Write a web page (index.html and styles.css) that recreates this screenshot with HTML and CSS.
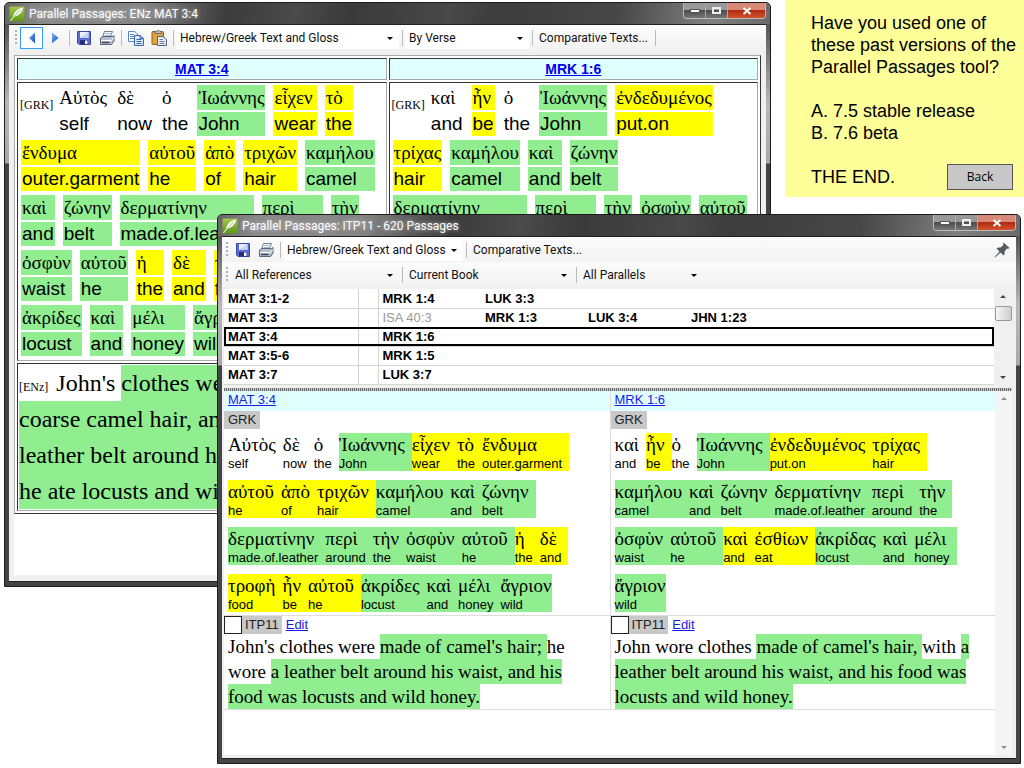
FILE: index.html
```html
<!DOCTYPE html>
<html lang="en">
<head>
<meta charset="utf-8">
<title>Parallel Passages</title>
<link rel="stylesheet" href="styles.css">
</head>
<body>
<svg class="defs" aria-hidden="true">
  <defs>
    <linearGradient id="gLeaf" x1="0" y1="0" x2="0" y2="1"><stop offset="0" stop-color="#a3c84c"/><stop offset="1" stop-color="#5f961a"/></linearGradient>
    <linearGradient id="gBlue" x1="0" y1="0" x2="1" y2="1"><stop offset="0" stop-color="#7fb2f2"/><stop offset="1" stop-color="#0b4fc4"/></linearGradient>
    <symbol id="logo" viewBox="0 0 16 16"><rect x=".5" y=".5" width="15" height="15" rx="1" fill="url(#gLeaf)"/><path d="M4 10.500C5 6 8.500 2.500 14 1.500C13.500 5 11.500 9 6 10.500Z" fill="#fff"/><path d="M1.500 15L6 9" stroke="#fff" stroke-width="1" fill="none"/><path d="M5 10.500L11.500 4" stroke="#86a84a" stroke-width=".8"/></symbol>
    <symbol id="prev" viewBox="0 0 16 16"><path d="M11 2.500V13.500L5 8Z" fill="url(#gBlue)"/></symbol>
    <symbol id="next" viewBox="0 0 16 16"><path d="M5 2.500V13.500L11.500 8Z" fill="url(#gBlue)"/></symbol>
    <symbol id="save" viewBox="0 0 16 16"><path d="M1.500 1.500H14.500V14.500H3L1.500 13Z" fill="#5a6cd4" stroke="#3a4aa4"/><rect x="4" y="2" width="8.500" height="6" fill="#e9effc"/><path d="M4 8L12.500 2V8Z" fill="#c4d2f2"/><rect x="4" y="10" width="8" height="4.500" fill="#25307c"/><rect x="9" y="10.500" width="2.500" height="3.500" fill="#fff"/></symbol>
    <symbol id="print" viewBox="0 0 16 16"><path d="M5.500 1.500H13.500L11 7.500H3.500Z" fill="#fbfcff" stroke="#6f7f98"/><path d="M6 3.500H11.500M5.500 5.500H11" stroke="#a9b8cf"/><path d="M1.500 8L4 6.500H13.500L15 5.500V11L12.500 14.500H1.500Z" fill="#b5bfcf" stroke="#58657a"/><path d="M2 10.500H12.500L15 7.500" stroke="#fff" fill="none"/><path d="M3 12.500H10.500" stroke="#3f4b5e" stroke-width="1.500"/></symbol>
    <symbol id="copy" viewBox="0 0 16 16"><path d="M.5 1.500H6.500L9.500 4V11.500H.5Z" fill="#f5f9ff" stroke="#5b86c4"/><path d="M2 4.500H6M2 6.500H6M2 8.500H6" stroke="#5b86c4"/><path d="M6.500 5.500H12L15.500 8.500V15.500H6.500Z" fill="#dfeafb" stroke="#3866ac"/><path d="M8.500 9.500H13.500M8.500 11.500H13.500M8.500 13.500H13.500M12 5.500V8.500H15.500" stroke="#3866ac" fill="none"/></symbol>
    <symbol id="paste" viewBox="0 0 16 16"><rect x="1" y="1.500" width="11.500" height="13" rx="1" fill="#e0a63c" stroke="#8d5f14"/><path d="M4 3.500V1.500H5.500L6.500.5H8L9 1.500H10.500V3.500Z" fill="#b9bdc6" stroke="#5b5f68" stroke-width=".8"/><path d="M6.500 6.500H12L15.500 9.500V15.500H6.500Z" fill="#e6ecf6" stroke="#55627c"/><path d="M8.500 9.500H12M8.500 11.500H13.500M8.500 13.500H13.500" stroke="#6d7f9f"/></symbol>
    <symbol id="pin" viewBox="0 0 16 16"><path d="M9.500.5L15.500 6L14 7L13 6.500L10.500 9.500C11 11 10.500 12.500 9.500 13.500L6.500 10.500L1 15.500L.5 15L5.500 9.500L2.500 6.500C3.500 5.500 5 5.200 6.500 5.500L9.500 3L9 2Z" fill="#55585e"/></symbol>
  </defs>
</svg>

<main class="desktop">
  <section class="window window-verse" aria-label="Parallel Passages: ENz MAT 3:4">
    <header class="titlebar">
      <svg class="app-icon"><use href="#logo"/></svg>
      <h1 class="title">Parallel Passages: ENz MAT 3:4</h1>
      <div class="controls">
        <button class="ctl" aria-label="Minimize"><span class="glyph-min"></span></button>
        <button class="ctl" aria-label="Maximize"><span class="glyph-max"></span></button>
        <button class="ctl ctl-close" aria-label="Close"><svg viewBox="0 0 10 8"><path d="M1.500 1L8.500 7M8.500 1L1.500 7"/></svg></button>
      </div>
    </header>
    <div class="client">
      <div class="toolbar">
        <span class="grip"></span>
        <button class="tool tool-active" aria-label="Previous"><svg><use href="#prev"/></svg></button>
        <button class="tool" aria-label="Next"><svg><use href="#next"/></svg></button>
        <span class="sep"></span>
        <button class="tool" aria-label="Save"><svg><use href="#save"/></svg></button>
        <button class="tool" aria-label="Print"><svg><use href="#print"/></svg></button>
        <span class="sep"></span>
        <button class="tool" aria-label="Copy"><svg><use href="#copy"/></svg></button>
        <button class="tool" aria-label="Paste"><svg><use href="#paste"/></svg></button>
        <span class="sep"></span>
        <span class="combo combo-white combo-xl"><select aria-label="Text view"><option>Hebrew/Greek Text and Gloss</option></select></span>
        <span class="sep"></span>
        <span class="combo combo-white combo-sm"><select aria-label="Grouping"><option>By Verse</option></select></span>
        <span class="sep"></span>
        <button class="text-tool">Comparative Texts...</button>
        <span class="sep"></span>
      </div>
      <div class="document">
        <table class="verse-table">
          <thead>
            <tr><th><a href="#">MAT 3:4</a></th><th><a href="#">MRK 1:6</a></th></tr>
          </thead>
          <tbody>
            <tr>
              <td>
                <div class="line"><span class="source">[GRK]</span><span class="w"><span>Αὐτὸς</span><span>self</span></span><span class="w"><span>δὲ</span><span>now</span></span><span class="w"><span>ὁ</span><span>the</span></span><span class="w g"><span>Ἰωάννης</span><span>John</span></span><span class="w y"><span>εἶχεν</span><span>wear</span></span><span class="w y"><span>τὸ</span><span>the</span></span></div>
                <div class="line"><span class="w y"><span>ἔνδυμα</span><span>outer.garment</span></span><span class="w y"><span>αὐτοῦ</span><span>he</span></span><span class="w y"><span>ἀπὸ</span><span>of</span></span><span class="w y"><span>τριχῶν</span><span>hair</span></span><span class="w g"><span>καμήλου</span><span>camel</span></span></div>
                <div class="line"><span class="w g"><span>καὶ</span><span>and</span></span><span class="w g"><span>ζώνην</span><span>belt</span></span><span class="w g"><span>δερματίνην</span><span>made.of.leather</span></span><span class="w g"><span>περὶ</span><span>around</span></span><span class="w g"><span>τὴν</span><span>the</span></span></div>
                <div class="line"><span class="w g"><span>ὀσφὺν</span><span>waist</span></span><span class="w g"><span>αὐτοῦ</span><span>he</span></span><span class="w y"><span>ἡ</span><span>the</span></span><span class="w y"><span>δὲ</span><span>and</span></span><span class="w y"><span>τροφὴ</span><span>food</span></span></div>
                <div class="line"><span class="w g"><span>ἀκρίδες</span><span>locust</span></span><span class="w g"><span>καὶ</span><span>and</span></span><span class="w g"><span>μέλι</span><span>honey</span></span><span class="w g"><span>ἄγριον</span><span>wild</span></span></div>
              </td>
              <td>
                <div class="line"><span class="source">[GRK]</span><span class="w"><span>καὶ</span><span>and</span></span><span class="w y"><span>ἦν</span><span>be</span></span><span class="w"><span>ὁ</span><span>the</span></span><span class="w g"><span>Ἰωάννης</span><span>John</span></span><span class="w y"><span>ἐνδεδυμένος</span><span>put.on</span></span></div>
                <div class="line"><span class="w y"><span>τρίχας</span><span>hair</span></span><span class="w g"><span>καμήλου</span><span>camel</span></span><span class="w g"><span>καὶ</span><span>and</span></span><span class="w g"><span>ζώνην</span><span>belt</span></span></div>
                <div class="line"><span class="w g"><span>δερματίνην</span><span>made.of.leather</span></span><span class="w g"><span>περὶ</span><span>around</span></span><span class="w g"><span>τὴν</span><span>the</span></span><span class="w g"><span>ὀσφὺν</span><span>waist</span></span><span class="w g"><span>αὐτοῦ</span><span>he</span></span></div>
              </td>
            </tr>
            <tr>
              <td><p class="prose"><span class="source-sm">[ENz]</span> John's <mark>clothes were made of<br>coarse camel hair, and he had a<br>leather belt around his waist;<br>he ate locusts and wild honey.</mark></p></td>
              <td></td>
            </tr>
          </tbody>
        </table>
      </div>
    </div>
  </section>

  <aside class="note">
    <p>Have you used one of<br>these past versions of the<br>Parallel Passages tool?</p>
    <p>A. 7.5 stable release<br>B. 7.6 beta</p>
    <div class="note-end"><p>THE END.</p><button class="back">Back</button></div>
  </aside>

  <section class="window window-list" aria-label="Parallel Passages: ITP11 - 620 Passages">
    <header class="titlebar">
      <svg class="app-icon"><use href="#logo"/></svg>
      <h1 class="title">Parallel Passages: ITP11 - 620 Passages</h1>
      <div class="controls">
        <button class="ctl" aria-label="Minimize"><span class="glyph-min"></span></button>
        <button class="ctl" aria-label="Maximize"><span class="glyph-max"></span></button>
        <button class="ctl ctl-close" aria-label="Close"><svg viewBox="0 0 10 8"><path d="M1.500 1L8.500 7M8.500 1L1.500 7"/></svg></button>
      </div>
    </header>
    <div class="client">
      <div class="toolbar">
        <span class="grip"></span>
        <button class="tool" aria-label="Save"><svg><use href="#save"/></svg></button>
        <button class="tool" aria-label="Print"><svg><use href="#print"/></svg></button>
        <span class="sep"></span>
        <span class="combo combo-white combo-lg"><select aria-label="Text view"><option>Hebrew/Greek Text and Gloss</option></select></span>
        <span class="sep"></span>
        <button class="text-tool">Comparative Texts...</button>
        <button class="tool tool-end" aria-label="Pin"><svg><use href="#pin"/></svg></button>
      </div>
      <div class="toolbar">
        <span class="grip"></span>
        <span class="combo combo-md"><select aria-label="References"><option>All References</option></select></span>
        <span class="sep"></span>
        <span class="combo combo-md"><select aria-label="Book"><option>Current Book</option></select></span>
        <span class="sep"></span>
        <span class="combo combo-sm"><select aria-label="Parallels"><option>All Parallels</option></select></span>
      </div>
      <div class="list">
        <table class="refs">
          <colgroup><col class="c-ref"><col class="c-mark"><col class="c-par"><col class="c-par"><col class="c-par"><col></colgroup>
          <tr><th scope="row">MAT 3:1-2</th><td></td><td>MRK 1:4</td><td>LUK 3:3</td><td></td><td></td></tr>
          <tr><th scope="row">MAT 3:3</th><td></td><td class="dim">ISA 40:3</td><td>MRK 1:3</td><td>LUK 3:4</td><td>JHN 1:23</td></tr>
          <tr class="current"><th scope="row">MAT 3:4</th><td></td><td>MRK 1:6</td><td></td><td></td><td></td></tr>
          <tr><th scope="row">MAT 3:5-6</th><td></td><td>MRK 1:5</td><td></td><td></td><td></td></tr>
          <tr><th scope="row">MAT 3:7</th><td></td><td>LUK 3:7</td><td></td><td></td><td></td></tr>
        </table>
        <div class="scroll"><span class="up"></span><span class="thumb"></span><span class="down"></span></div>
      </div>
      <div class="splitter"></div>
      <div class="detail">
        <div class="passages">
          <div class="passage">
            <div class="ref"><a href="#">MAT 3:4</a></div>
            <div class="greek">
              <span class="tag">GRK</span>
              <div class="line"><span class="w"><span>Αὐτὸς</span><span>self</span></span><span class="w"><span>δὲ</span><span>now</span></span><span class="w"><span>ὁ</span><span>the</span></span><span class="w g"><span>Ἰωάννης</span><span>John</span></span><span class="w y"><span>εἶχεν</span><span>wear</span></span><span class="w y"><span>τὸ</span><span>the</span></span><span class="w y"><span>ἔνδυμα</span><span>outer.garment</span></span></div>
              <div class="line"><span class="w y"><span>αὐτοῦ</span><span>he</span></span><span class="w y"><span>ἀπὸ</span><span>of</span></span><span class="w y"><span>τριχῶν</span><span>hair</span></span><span class="w g"><span>καμήλου</span><span>camel</span></span><span class="w g"><span>καὶ</span><span>and</span></span><span class="w g"><span>ζώνην</span><span>belt</span></span></div>
              <div class="line"><span class="w g"><span>δερματίνην</span><span>made.of.leather</span></span><span class="w g"><span>περὶ</span><span>around</span></span><span class="w g"><span>τὴν</span><span>the</span></span><span class="w g"><span>ὀσφὺν</span><span>waist</span></span><span class="w g"><span>αὐτοῦ</span><span>he</span></span><span class="w y"><span>ἡ</span><span>the</span></span><span class="w y"><span>δὲ</span><span>and</span></span></div>
              <div class="line"><span class="w y"><span>τροφὴ</span><span>food</span></span><span class="w y"><span>ἦν</span><span>be</span></span><span class="w y"><span>αὐτοῦ</span><span>he</span></span><span class="w g"><span>ἀκρίδες</span><span>locust</span></span><span class="w g"><span>καὶ</span><span>and</span></span><span class="w g"><span>μέλι</span><span>honey</span></span><span class="w g end"><span>ἄγριον</span><span>wild</span></span></div>
            </div>
            <div class="version">
              <div class="version-head"><input type="checkbox" id="pick-mat"><label class="tag" for="pick-mat">ITP11</label><a href="#">Edit</a></div>
              <p class="prose">John's clothes were <mark>made of camel's hair; </mark>he<br>wore <mark>a leather belt around his waist, and his<br>food was locusts and wild honey.</mark></p>
            </div>
          </div>
          <div class="passage">
            <div class="ref"><a href="#">MRK 1:6</a></div>
            <div class="greek">
              <span class="tag">GRK</span>
              <div class="line"><span class="w"><span>καὶ</span><span>and</span></span><span class="w y"><span>ἦν</span><span>be</span></span><span class="w"><span>ὁ</span><span>the</span></span><span class="w g"><span>Ἰωάννης</span><span>John</span></span><span class="w y"><span>ἐνδεδυμένος</span><span>put.on</span></span><span class="w y"><span>τρίχας</span><span>hair</span></span></div>
              <div class="line"><span class="w g"><span>καμήλου</span><span>camel</span></span><span class="w g"><span>καὶ</span><span>and</span></span><span class="w g"><span>ζώνην</span><span>belt</span></span><span class="w g"><span>δερματίνην</span><span>made.of.leather</span></span><span class="w g"><span>περὶ</span><span>around</span></span><span class="w g"><span>τὴν</span><span>the</span></span></div>
              <div class="line"><span class="w g"><span>ὀσφὺν</span><span>waist</span></span><span class="w g"><span>αὐτοῦ</span><span>he</span></span><span class="w y"><span>καὶ</span><span>and</span></span><span class="w y"><span>ἐσθίων</span><span>eat</span></span><span class="w g"><span>ἀκρίδας</span><span>locust</span></span><span class="w g"><span>καὶ</span><span>and</span></span><span class="w g"><span>μέλι</span><span>honey</span></span></div>
              <div class="line"><span class="w g end"><span>ἄγριον</span><span>wild</span></span></div>
            </div>
            <div class="version">
              <div class="version-head"><input type="checkbox" id="pick-mrk"><label class="tag" for="pick-mrk">ITP11</label><a href="#">Edit</a></div>
              <p class="prose">John wore clothes <mark>made of camel's hair, </mark>with <mark>a<br>leather belt around his waist, and his food was<br>locusts and wild honey.</mark></p>
            </div>
          </div>
        </div>
        <div class="scroll scroll-dim"><span class="up"></span><span class="down"></span></div>
      </div>
    </div>
  </section>
</main>
</body>
</html>
```
FILE: styles.css
```css
* { box-sizing: border-box; }
body { margin: 0; background: #fff; color: #000; font-family: "Liberation Sans", Arial, sans-serif; }
p, h1 { margin: 0; }
button { padding: 0; border: 0; background: none; color: inherit; font: inherit; }
a { color: #1a1ae6; }
mark { background: #90ee90; color: inherit; }
.defs { position: absolute; width: 0; height: 0; }
.desktop { position: relative; min-height: 100vh; overflow: hidden; }

/* Windows */
.window { position: absolute; display: flex; flex-direction: column; padding: 0 4px 4px; border: 1px solid #1c1c1c; border-radius: 5px 5px 0 0; }
.window-verse { left: 4px; top: 2px; width: 767px; height: 585px; background: linear-gradient(#555 22px, #b8b8b8 100px, #a8a8a8 160px, #444 161px); }
.window-list { left: 217px; top: 214px; width: 804px; height: 550px; background: linear-gradient(#555 22px, #b8b8b8 90px, #a8a8a8 150px, #444 151px); }
.titlebar { display: flex; align-items: center; gap: 4px; height: 21px; margin: 0 -4px; padding: 0 4px; border-radius: 4px 4px 0 0; background: linear-gradient(100deg, #666 0%, #8a8a8a 5%, #858585 18%, #3c3c3c 29%, #4a4a4a 38%, #3a3a3a 45%, #484848 58%, #3d3d3d 64%, #474747 80%, #808080 92%, #6a6a6a 100%); }
.app-icon { width: 16px; height: 16px; }
.title { flex: 1; color: #fff; font: 12px/20px Roboto, "Noto Sans", sans-serif; text-shadow: 0 0 4px #ccc; white-space: nowrap; }
.controls { display: flex; align-self: flex-start; border: 1px solid #bbb; border-top: 0; border-radius: 0 0 4px 4px; overflow: hidden; }
.ctl { display: flex; align-items: center; justify-content: center; width: 22px; height: 15px; border-right: 1px solid #aaa; background: linear-gradient(#999 45%, #4c4c4c 50%, #777); }
.ctl-close { width: 37px; border: 0; background: linear-gradient(#d8897a 45%, #b02a12 50%, #d4532c); }
.ctl svg { width: 10px; height: 8px; fill: none; stroke: #fff; stroke-width: 2; }
.glyph-min { width: 10px; height: 4px; border: 1px solid #555; background: #fff; }
.glyph-max { width: 9px; height: 7px; border: 2px solid #eee; }
.client { display: flex; flex: 1; flex-direction: column; min-height: 0; border: 1px solid #222; border-width: 1px 0; background: #f0f0f0; }

/* Toolbars */
.toolbar { display: flex; align-items: center; height: 25px; padding-left: 6px; background: linear-gradient(#fcfcfc, #f2f2f2); color: #111; font: 12px/20px Roboto, "Noto Sans", sans-serif; }
.window-list .toolbar { padding-left: 4px; }
.grip { width: 2px; height: 15px; margin-right: 3px; background: repeating-linear-gradient(#b0b0b0 0 2px, transparent 2px 4px); }
.tool { display: flex; align-items: center; justify-content: center; width: 23px; height: 22px; }
.tool svg { width: 16px; height: 16px; }
.tool-active { border: 1px solid #3399ff; background: #fff; }
.tool-end { margin: 0 3px 0 auto; }
.sep { width: 1px; height: 16px; margin: 0 2px 0 3px; background: #bcbcbc; }
.text-tool { padding: 0 4px; white-space: nowrap; }
.combo { position: relative; height: 22px; }
.combo::after { content: ""; position: absolute; right: 6px; top: 10px; border: 3px solid transparent; border-top-color: #000; border-bottom: 0; pointer-events: none; }
.combo select { width: 100%; height: 22px; padding: 0 4px; border: 0; background: transparent; color: inherit; font: inherit; appearance: none; }
.combo-white { background: #fff; }
.combo-xl { width: 223px; }
.combo-lg { width: 180px; }
.combo-md { width: 168px; }
.combo-sm { width: 124px; }

/* Interlinear words */
.line { display: flex; }
.w { display: flex; flex-direction: column; white-space: nowrap; }
.w > :first-child { font-family: "Liberation Serif", "Times New Roman", serif; }
.prose { font-family: "Liberation Serif", "Times New Roman", serif; white-space: nowrap; }

/* Verse window */
.document { flex: 1; margin: 5px 5px 6px; overflow: hidden; background: #fff; }
.verse-table { width: 100%; border: 1px solid; border-color: #aaa #333 #333 #aaa; border-spacing: 2px; table-layout: fixed; }
.verse-table th, .verse-table td { border: 1px solid; border-color: #333 #aaa #aaa #333; padding: 1px; vertical-align: top; }
.verse-table th { background: #e0ffff; font-size: 14px; line-height: 18px; }
.verse-table th a { color: #00e; }
.verse-table .line { gap: 8px; height: 55px; padding: 1px 2px 3px; }
.verse-table .w { gap: 2px; }
.verse-table .w > span { padding: 0 1px; }
.verse-table .w > :first-child { font-size: 19px; line-height: 25px; }
.verse-table .w > :last-child { font-size: 19px; line-height: 24px; }
.verse-table .g > span, .window-list .g { background: #90ee90; }
.verse-table .y > span, .window-list .y { background: #ff0; }
.verse-table .source { margin: 11px -3px 0 -1px; font: 12px/18px "Liberation Serif", serif; }
.verse-table .source-sm { margin-right: 2px; font-size: 12px; line-height: 12px; }
.verse-table .prose { font-size: 24px; line-height: 36px; }
.verse-table mark { padding: 5px 0; }

/* Passage list window */
.list { display: flex; margin: 2px 4px 0 2px; background: #fff; }
.refs { flex: 1; border-collapse: collapse; table-layout: fixed; font-size: 13px; line-height: 17px; }
.refs th, .refs td { height: 19px; padding: 0 4px; border-bottom: 1px solid #d4d4d4; font-weight: bold; text-align: left; white-space: nowrap; }
.refs th, .refs td:nth-child(2) { border-right: 1px solid #d4d4d4; }
.refs .dim { color: #999; font-weight: normal; }
.refs .current { outline: 2px solid #000; outline-offset: -2px; }
.c-ref { width: 134px; }
.c-mark { width: 20px; }
.c-par { width: 103px; }
.scroll { display: flex; flex-direction: column; align-items: center; width: 18px; padding: 6px 0; background: #f0f0f0; }
.up, .down { border: 3px solid transparent; }
.up { border-top: 0; border-bottom-color: #444; }
.down { margin-top: auto; border-bottom: 0; border-top-color: #444; }
.thumb { width: 17px; height: 15px; margin-top: 8px; border: 1px solid #999; border-radius: 2px; background: linear-gradient(90deg, #f6f6f6, #ccc); }
.scroll-dim { width: 17px; opacity: .6; }
.splitter { height: 3px; margin: 3px 4px 0 2px; background: repeating-linear-gradient(90deg, #666 0 1px, #ccc 1px 2px); }
.detail { display: flex; flex: 1; margin: 0 4px 3px 2px; background: #fff; }
.passages { display: grid; flex: 1; grid-template-columns: 1fr 1fr; align-content: start; }
.passage { font-size: 13px; line-height: 18px; }
.passage + .passage { border-left: 1px solid #ddd; }
.ref { height: 20px; padding: 0 4px; background: #e0ffff; }
.greek { height: 205px; border-bottom: 1px solid #ddd; }
.tag { display: inline-block; height: 18px; padding: 0 4px; background: #c8c8c8; color: #222; vertical-align: top; }
.greek .line { height: 38px; margin: 4px 4px 9px; }
.greek .w { padding-right: 7px; }
.greek .w.end { padding-right: 0; }
.greek .w > :first-child { font-size: 19px; line-height: 24px; }
.greek .w > :last-child { font-size: 13px; line-height: 14px; }
.version { border-bottom: 1px solid #ddd; }
.version-head { display: flex; height: 18px; }
.version-head input { width: 18px; height: 18px; margin: 0; border: 1px solid #222; background: #fff; appearance: none; }
.version-head .tag { padding: 0 3px; }
.version-head a { margin-left: 4px; }
.version .prose { padding: 0 4px; font-size: 19px; line-height: 25px; }
.version mark { padding: 2px 0; }

/* Note */
.note { position: absolute; top: 0; left: 785px; right: 0; display: flex; flex-direction: column; gap: 22px; padding: 12px 0 9px 26px; background: #ffff99; font-size: 18px; line-height: 22px; white-space: nowrap; }
.note-end { display: flex; align-items: center; justify-content: space-between; padding-right: 11px; }
.back { width: 66px; height: 26px; margin: -2px 0; border: 1px solid #555; background: #c8c8c8; font: 12px/20px "Open Sans", sans-serif; }
```
